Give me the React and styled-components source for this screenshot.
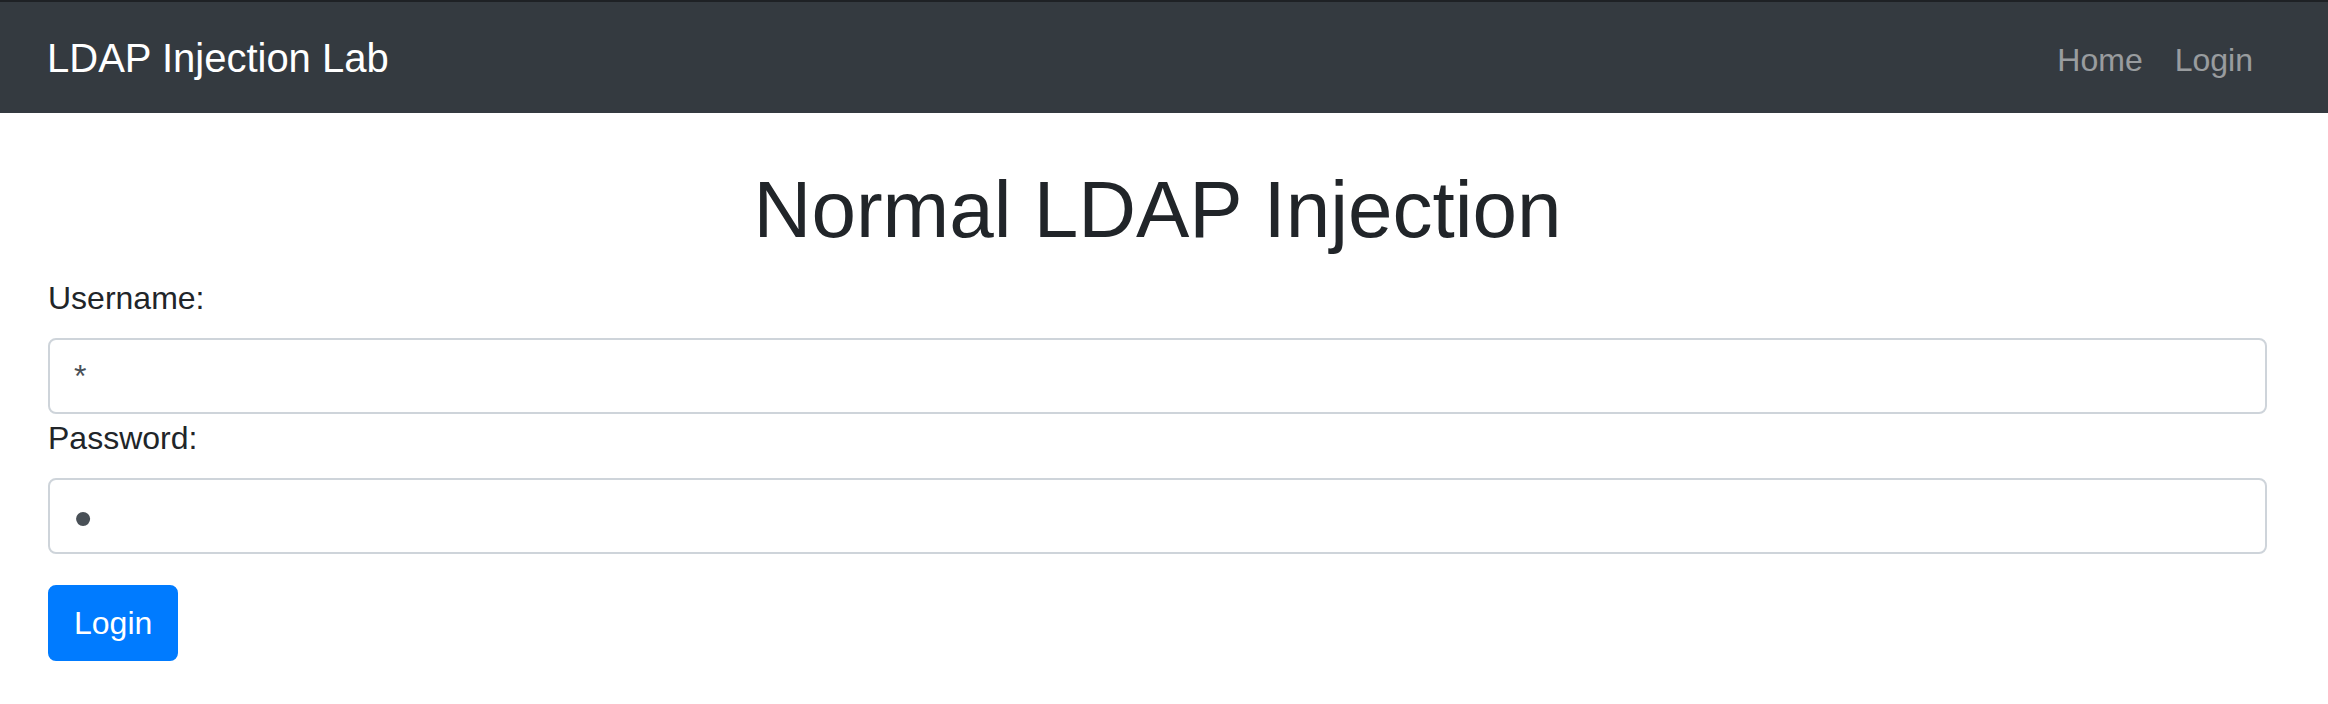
import React from "react";
import styled, { createGlobalStyle } from "styled-components";

const GlobalStyle = createGlobalStyle`
  *, *::before, *::after {
    box-sizing: border-box;
  }

  html, body {
    margin: 0;
    padding: 0;
    background-color: #fff;
  }

  body {
    font-family: "Liberation Sans", Arial, sans-serif;
    font-size: 32px;
    line-height: 1.5;
    color: #212529;
  }
`;

const Navbar = styled.nav`
  display: flex;
  align-items: center;
  justify-content: space-between;
  height: 113px;
  padding: 0 59px 0 47px;
  background-color: #343a40;
  border-top: 2px solid #1e2125;
`;

const Brand = styled.a`
  font-size: 40px;
  line-height: 60px;
  padding: 10px 0;
  color: #fff;
  text-decoration: none;
  white-space: nowrap;
`;

const NavList = styled.ul`
  display: flex;
  margin: 0;
  padding: 0;
  list-style: none;
`;

const NavLink = styled.a`
  display: block;
  padding: 16px 16px 12px;
  color: rgba(255, 255, 255, 0.5);
  text-decoration: none;
`;

const Main = styled.main`
  padding: 49px 61px 0 48px;
`;

const Title = styled.h1`
  margin: 0 0 16px;
  font-size: 80px;
  font-weight: 500;
  line-height: 1.2;
  text-align: center;
`;

const Label = styled.label`
  display: block;
  margin-bottom: 16px;
`;

// the password mask is drawn larger than the text, as in the reference
const Input = styled.input`
  display: block;
  width: 100%;
  height: 76px;
  padding: ${p => (p.type === "password" ? "4px 24px 0" : "12px 24px")};
  font-family: inherit;
  font-size: ${p => (p.type === "password" ? "52px" : "32px")};
  line-height: ${p => (p.type === "password" ? "68px" : "1.5")};
  color: #495057;
  background-color: #fff;
  border: 2px solid #ced4da;
  border-radius: 8px;
  outline: none;
`;

const Button = styled.button`
  margin-top: 31px;
  padding: 12px 24px;
  font-family: inherit;
  font-size: 32px;
  line-height: 1.5;
  color: #fff;
  background-color: #007bff;
  border: 2px solid #007bff;
  border-radius: 8px;
  cursor: pointer;
`;

export default function App() {
  return (
    <>
      <GlobalStyle />
      <Navbar>
        <Brand href="#">LDAP Injection Lab</Brand>
        <NavList>
          <li>
            <NavLink href="#">Home</NavLink>
          </li>
          <li>
            <NavLink href="#">Login</NavLink>
          </li>
        </NavList>
      </Navbar>
      <Main>
        <Title>Normal LDAP Injection</Title>
        <form onSubmit={e => e.preventDefault()}>
          <Label htmlFor="username">Username:</Label>
          <Input id="username" type="text" value="*" readOnly />
          <Label htmlFor="password">Password:</Label>
          <Input id="password" type="password" value="*" readOnly />
          <Button type="submit">Login</Button>
        </form>
      </Main>
    </>
  );
}
